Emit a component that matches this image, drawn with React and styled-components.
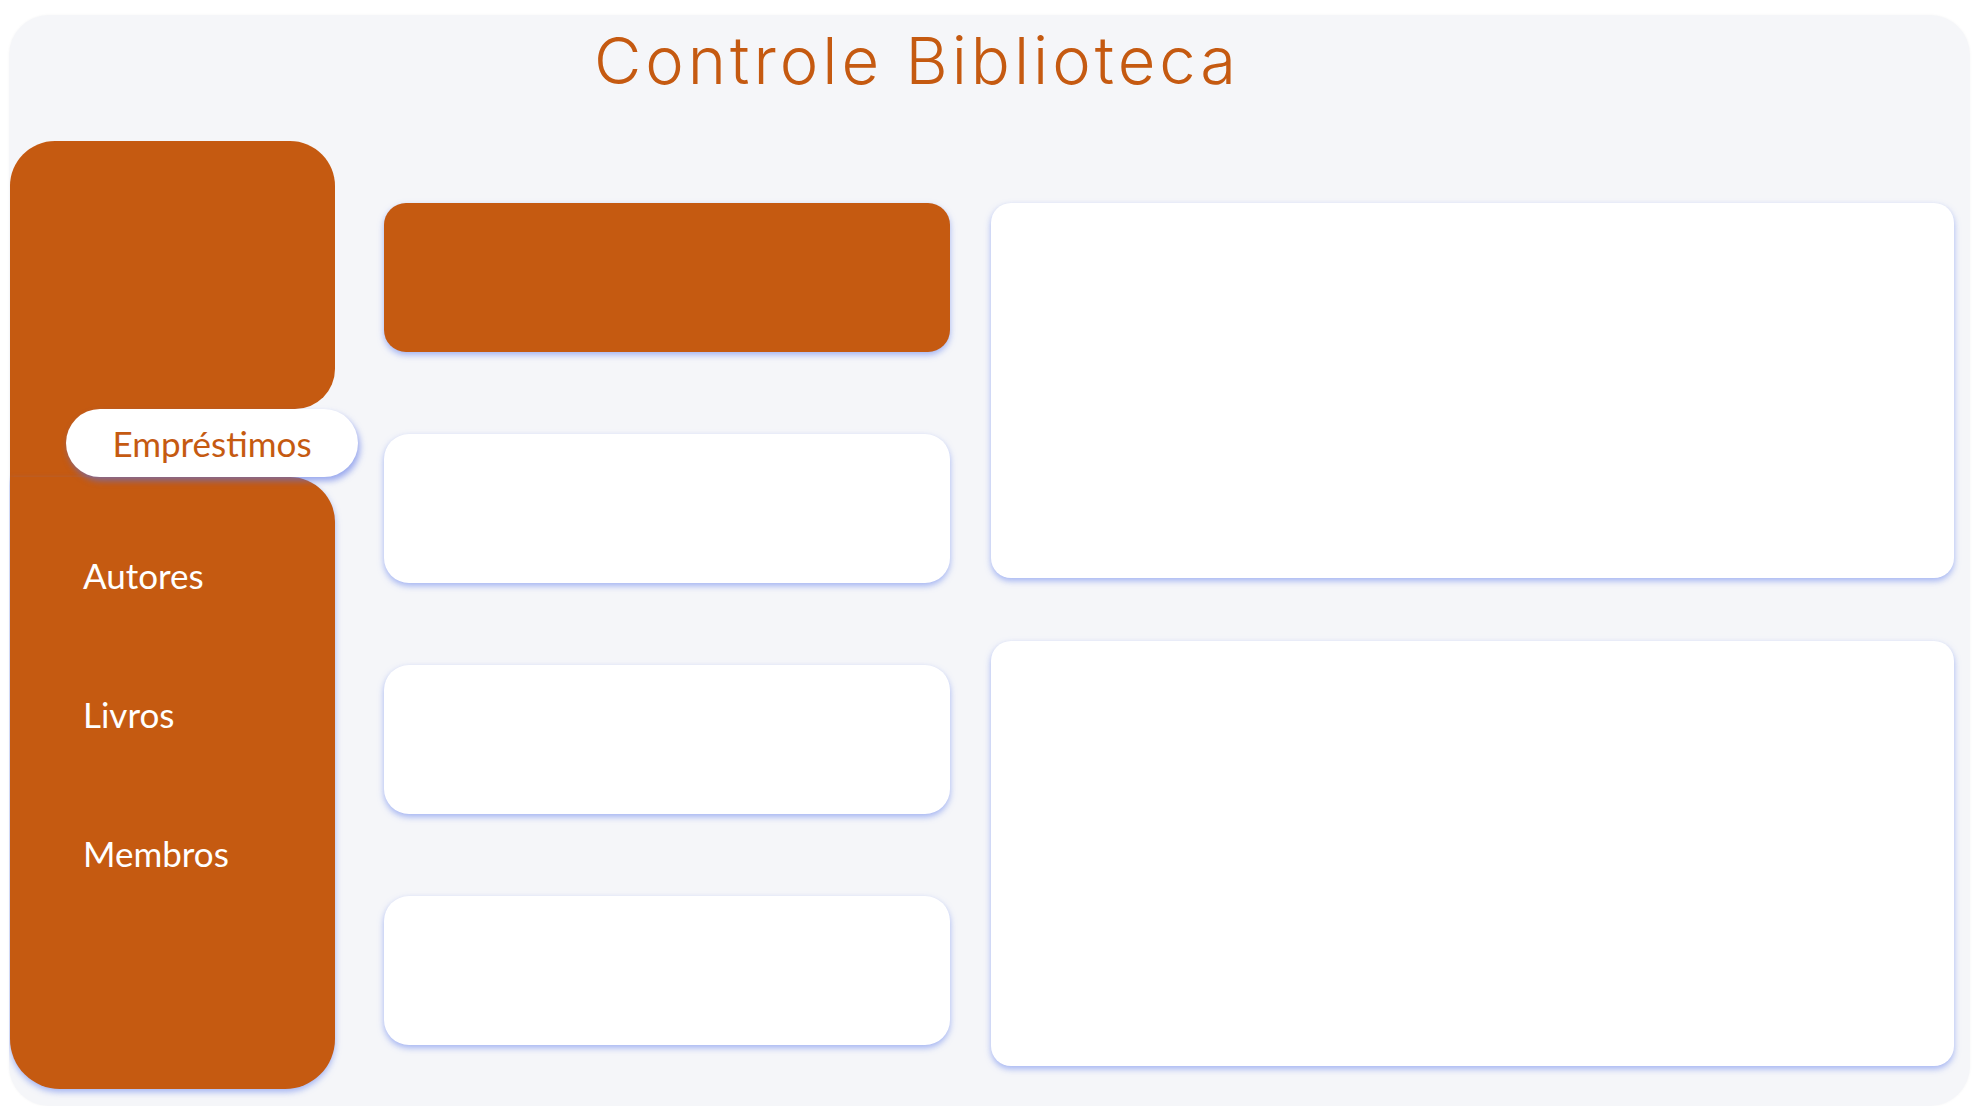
import React from "react";
import styled, { createGlobalStyle } from "styled-components";

const ORANGE = "#c55a11";
const SHADOW = "0 3px 6px rgba(96, 126, 236, 0.55)";

const Global = createGlobalStyle`
  html, body { margin: 0; padding: 0; background: #ffffff; }
  body { font-family: "Lato", "Open Sans", sans-serif; }
  * { box-sizing: border-box; }
`;

const Panel = styled.div`
  margin: 15px 3px 0 9px;
  width: 1961px;
  height: 1091px;
  background: #f5f6f9;
  border-radius: 40px;
  box-shadow: 0 0 3px rgba(0, 0, 0, 0.04);
  display: flex;
  flex-direction: column;
  overflow: hidden;
`;

const Header = styled.header`
  height: 126px;
  padding: 6px 0 0 585px;
  display: flex;
  align-items: flex-start;
`;

const Title = styled.h1`
  margin: 0;
  font-family: "Inter", sans-serif;
  font-weight: 300;
  font-size: 65px;
  line-height: 80px;
  letter-spacing: 4px;
  color: ${ORANGE};
`;

const Body = styled.div`
  display: flex;
  align-items: flex-start;
  padding-left: 1px;
`;

const Sidebar = styled.nav`
  width: 325px;
  flex-shrink: 0;
  display: flex;
  flex-direction: column;
`;

const TopBlock = styled.div`
  height: 268px;
  background: ${ORANGE};
  border-radius: 45px 45px 40px 0;
`;

const ActiveRow = styled.div`
  height: 68px;
  padding-left: 56px;
  display: flex;
  background: linear-gradient(to right, ${ORANGE} 0 120px, transparent 120px);
`;

const ActivePill = styled.div`
  position: relative;
  z-index: 1;
  flex: 0 0 292px;
  width: 292px;
  height: 68px;
  border-radius: 34px;
  background: #ffffff;
  box-shadow: 2px 4px 6px rgba(90, 115, 230, 0.6);
  display: flex;
  align-items: center;
  justify-content: center;
  font-size: 35px;
  color: ${ORANGE};
`;

const BottomBlock = styled.div`
  height: 612px;
  background: ${ORANGE};
  border-radius: 0 45px 50px 50px;
  box-shadow: ${SHADOW};
  padding: 77px 0 0 73px;
  display: flex;
  flex-direction: column;
  gap: 97px;
`;

const NavItem = styled.div`
  font-size: 35px;
  line-height: 42px;
  color: #ffffff;
`;

const Content = styled.div`
  margin: 62px 0 0 49px;
  display: flex;
  gap: 41px;
`;

const LeftColumn = styled.div`
  width: 566px;
  display: flex;
  flex-direction: column;
  gap: 82px;
`;

const RightColumn = styled.div`
  width: 963px;
  display: flex;
  flex-direction: column;
  gap: 63px;
`;

const Card = styled.div`
  height: ${(p) => p.$h}px;
  background: ${(p) => (p.$accent ? ORANGE : "#ffffff")};
  border-radius: ${(p) => p.$r}px;
  box-shadow: ${SHADOW};
`;

export default function App() {
  return (
    <>
      <Global />
      <Panel>
        <Header>
          <Title>Controle Biblioteca</Title>
        </Header>
        <Body>
          <Sidebar>
            <TopBlock />
            <ActiveRow>
              <ActivePill>Empréstimos</ActivePill>
            </ActiveRow>
            <BottomBlock>
              <NavItem>Autores</NavItem>
              <NavItem>Livros</NavItem>
              <NavItem>Membros</NavItem>
            </BottomBlock>
          </Sidebar>
          <Content>
            <LeftColumn>
              <Card $accent $h={149} $r={22} />
              <Card $h={149} $r={25} />
              <Card $h={149} $r={25} />
              <Card $h={149} $r={25} />
            </LeftColumn>
            <RightColumn>
              <Card $h={375} $r={20} />
              <Card $h={425} $r={20} />
            </RightColumn>
          </Content>
        </Body>
      </Panel>
    </>
  );
}
